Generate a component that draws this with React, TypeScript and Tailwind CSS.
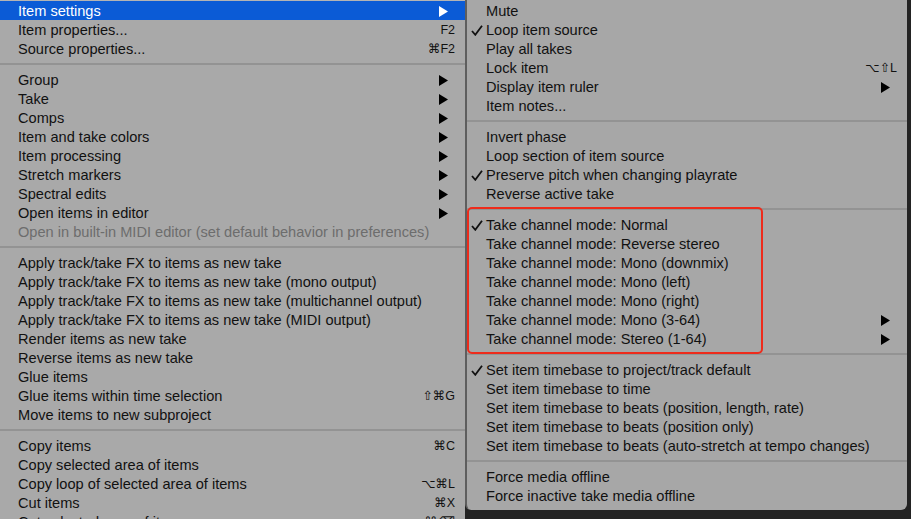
import React from "react";

type Entry =
  | { sep: true }
  | {
      sep?: false;
      label: string;
      shortcut?: string;
      sub?: boolean;
      checked?: boolean;
      disabled?: boolean;
      active?: boolean;
    };

const leftMenu: Entry[] = [
  { label: "Item settings", sub: true, active: true },
  { label: "Item properties...", shortcut: "F2" },
  { label: "Source properties...", shortcut: "⌘F2" },
  { sep: true },
  { label: "Group", sub: true },
  { label: "Take", sub: true },
  { label: "Comps", sub: true },
  { label: "Item and take colors", sub: true },
  { label: "Item processing", sub: true },
  { label: "Stretch markers", sub: true },
  { label: "Spectral edits", sub: true },
  { label: "Open items in editor", sub: true },
  { label: "Open in built-in MIDI editor (set default behavior in preferences)", disabled: true },
  { sep: true },
  { label: "Apply track/take FX to items as new take" },
  { label: "Apply track/take FX to items as new take (mono output)" },
  { label: "Apply track/take FX to items as new take (multichannel output)" },
  { label: "Apply track/take FX to items as new take (MIDI output)" },
  { label: "Render items as new take" },
  { label: "Reverse items as new take" },
  { label: "Glue items" },
  { label: "Glue items within time selection", shortcut: "⇧⌘G" },
  { label: "Move items to new subproject" },
  { sep: true },
  { label: "Copy items", shortcut: "⌘C" },
  { label: "Copy selected area of items" },
  { label: "Copy loop of selected area of items", shortcut: "⌥⌘L" },
  { label: "Cut items", shortcut: "⌘X" },
  { label: "Cut selected area of items", shortcut: "⌘⌫" },
];

const topItems: Entry[] = [
  { label: "Mute" },
  { label: "Loop item source", checked: true },
  { label: "Play all takes" },
  { label: "Lock item", shortcut: "⌥⇧L" },
  { label: "Display item ruler", sub: true },
  { label: "Item notes..." },
  { sep: true },
  { label: "Invert phase" },
  { label: "Loop section of item source" },
  { label: "Preserve pitch when changing playrate", checked: true },
  { label: "Reverse active take" },
  { sep: true },
];

const channelItems: Entry[] = [
  { label: "Take channel mode: Normal", checked: true },
  { label: "Take channel mode: Reverse stereo" },
  { label: "Take channel mode: Mono (downmix)" },
  { label: "Take channel mode: Mono (left)" },
  { label: "Take channel mode: Mono (right)" },
  { label: "Take channel mode: Mono (3-64)", sub: true },
  { label: "Take channel mode: Stereo (1-64)", sub: true },
];

const bottomItems: Entry[] = [
  { sep: true },
  { label: "Set item timebase to project/track default", checked: true },
  { label: "Set item timebase to time" },
  { label: "Set item timebase to beats (position, length, rate)" },
  { label: "Set item timebase to beats (position only)" },
  { label: "Set item timebase to beats (auto-stretch at tempo changes)" },
  { sep: true },
  { label: "Force media offline" },
  { label: "Force inactive take media offline" },
];

const Arrow = ({ white }: { white?: boolean }) => (
  <svg width="9" height="11" viewBox="0 0 9 11" className="mr-[7px]">
    <path d="M0 0 L9 5.5 L0 11 Z" fill={white ? "#ffffff" : "#000000"} />
  </svg>
);

const Check = () => (
  <svg width="12" height="11" viewBox="0 0 12 11" className="absolute left-[4px] top-[5px]">
    <path d="M1 6 L4.3 9.8 L11 0.8" fill="none" stroke="#111" strokeWidth="1.8" />
  </svg>
);

const Row = ({ item, pad }: { item: Entry; pad: string }) => {
  if (item.sep) {
    return (
      <div className="flex h-[12px] items-center">
        <div className="h-[2px] w-full bg-[#939393]" />
      </div>
    );
  }
  const color = item.active
    ? "bg-[#0b5bd6] text-white"
    : item.disabled
      ? "text-[#6d6d6d]"
      : "text-[#111111]";
  return (
    <div className={`relative flex h-[19px] items-center pt-[2px] pr-[10px] ${pad} ${color}`}>
      {item.checked && <Check />}
      <span className="flex-1 whitespace-nowrap">{item.label}</span>
      {item.shortcut && (
        <span className="whitespace-nowrap font-['Liberation_Sans','DejaVu_Sans',sans-serif] text-[12.5px]">
          {item.shortcut}
        </span>
      )}
      {item.sub && <Arrow white={item.active} />}
    </div>
  );
};

export default function App() {
  return (
    <div className="flex h-[519px] w-[911px] overflow-hidden bg-[#232323] font-['Liberation_Sans','DejaVu_Sans',sans-serif] text-[14.6px] leading-none">
      <div className="w-[465px] shrink-0 border-t border-[#b4b4b4] bg-[#a9a9a9]">
        {leftMenu.map((item, i) => (
          <Row key={i} item={item} pad="pl-[18px]" />
        ))}
      </div>

      <div className="h-[510px] w-[442px] shrink-0 rounded-b-[6px] border-l-2 border-[#5e5e5e] bg-[#a7a7a7] pt-px pb-[5px]">
        {topItems.map((item, i) => (
          <Row key={i} item={item} pad="pl-[19px]" />
        ))}
        <div className="relative">
          {channelItems.map((item, i) => (
            <Row key={i} item={item} pad="pl-[19px]" />
          ))}
          <span className="pointer-events-none absolute -top-[8px] -bottom-[6px] left-0 w-[296px] rounded-[5px] border-2 border-[#ee2b1b]" />
        </div>
        {bottomItems.map((item, i) => (
          <Row key={i} item={item} pad="pl-[19px]" />
        ))}
      </div>
    </div>
  );
}
